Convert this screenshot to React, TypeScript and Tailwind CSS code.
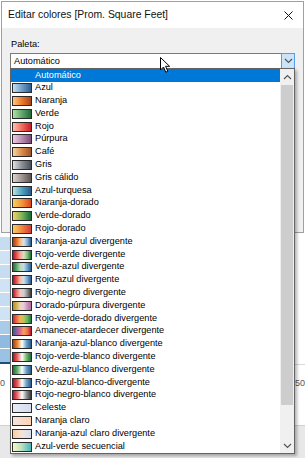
import React from 'react'

// Palette list shown in the open dropdown; swatch classes are written out in full
const palettes: { name: string; swatch: string }[] = [
  { name: 'Azul', swatch: 'bg-[linear-gradient(90deg,#c4dff2,#6f9fcb,#2c5d8e)]' },
  { name: 'Naranja', swatch: 'bg-[linear-gradient(90deg,#ffc685,#ec7a26,#a9451e)]' },
  { name: 'Verde', swatch: 'bg-[linear-gradient(90deg,#b3e0a6,#5fa66b,#24693d)]' },
  { name: 'Rojo', swatch: 'bg-[linear-gradient(90deg,#ffbeb2,#f26b5b,#c41e2e)]' },
  { name: 'Púrpura', swatch: 'bg-[linear-gradient(90deg,#eec9e5,#b98db2,#7c4d79)]' },
  { name: 'Café', swatch: 'bg-[linear-gradient(90deg,#f6d3a0,#d98a4a,#9f5228)]' },
  { name: 'Gris', swatch: 'bg-[linear-gradient(90deg,#e0e0e0,#8a8f96,#4a5058)]' },
  { name: 'Gris cálido', swatch: 'bg-[linear-gradient(90deg,#dcd4d0,#9e9390,#5e5452)]' },
  { name: 'Azul-turquesa', swatch: 'bg-[linear-gradient(90deg,#bce4d8,#4da3c4,#2c5985)]' },
  { name: 'Naranja-dorado', swatch: 'bg-[linear-gradient(90deg,#f4d166,#f4953a,#d8461b)]' },
  { name: 'Verde-dorado', swatch: 'bg-[linear-gradient(90deg,#f4d166,#7fb35a,#146c36)]' },
  { name: 'Rojo-dorado', swatch: 'bg-[linear-gradient(90deg,#f4d166,#f2843d,#d43d35)]' },
  { name: 'Naranja-azul divergente', swatch: 'bg-[linear-gradient(90deg,#9e3d22,#e56d26,#f6b97a,#dfe4ea,#7fb0d6,#2b5c8a)]' },
  { name: 'Rojo-verde divergente', swatch: 'bg-[linear-gradient(90deg,#a3123a,#e8524c,#f7a58f,#d8e0cc,#80c071,#24693d)]' },
  { name: 'Verde-azul divergente', swatch: 'bg-[linear-gradient(90deg,#24693d,#5aa867,#b4dcb3,#c6dbe9,#6ba3cf,#2b5c8a)]' },
  { name: 'Rojo-azul divergente', swatch: 'bg-[linear-gradient(90deg,#a90c38,#e5574c,#fbbca6,#cfdfef,#74a7d1,#2e5a87)]' },
  { name: 'Rojo-negro divergente', swatch: 'bg-[linear-gradient(90deg,#ae123a,#ea6f68,#f2c5bc,#cfcfcf,#8c8c8c,#3c3c3c)]' },
  { name: 'Dorado-púrpura divergente', swatch: 'bg-[linear-gradient(90deg,#ad9024,#d0b35a,#ead9b9,#e9c9dd,#c994b8,#ac6f9a)]' },
  { name: 'Rojo-verde-dorado divergente', swatch: 'bg-[linear-gradient(90deg,#be2a3e,#ec6a45,#f2b353,#b9c45e,#6ab35f,#22763f)]' },
  { name: 'Amanecer-atardecer divergente', swatch: 'bg-[linear-gradient(90deg,#33608c,#8a5fa0,#e0678b,#f7a35b,#ee7445,#b81840)]' },
  { name: 'Naranja-azul-blanco divergente', swatch: 'bg-[linear-gradient(90deg,#9e3d22,#f08a2c,#ffffff,#6aa1c7,#2b5c8a)]' },
  { name: 'Rojo-verde-blanco divergente', swatch: 'bg-[linear-gradient(90deg,#a3123a,#ec6a5a,#ffffff,#76b96a,#24693d)]' },
  { name: 'Verde-azul-blanco divergente', swatch: 'bg-[linear-gradient(90deg,#24693d,#67b26f,#ffffff,#6aa1c7,#2b5c8a)]' },
  { name: 'Rojo-azul-blanco-divergente', swatch: 'bg-[linear-gradient(90deg,#a90c38,#e8604f,#ffffff,#6fa2cb,#2e5a87)]' },
  { name: 'Rojo-negro-blanco divergente', swatch: 'bg-[linear-gradient(90deg,#ae123a,#ec6f6a,#ffffff,#8f8f8f,#3a3a3a)]' },
  { name: 'Celeste', swatch: 'bg-[linear-gradient(90deg,#e6ebf5,#d4dcee)]' },
  { name: 'Naranja claro', swatch: 'bg-[linear-gradient(90deg,#f4e4dc,#fcd2b5)]' },
  { name: 'Naranja-azul claro divergente', swatch: 'bg-[linear-gradient(90deg,#ffc99a,#f3e6dc,#d6deef)]' },
  { name: 'Azul-verde secuencial', swatch: 'bg-[linear-gradient(90deg,#fdf6c5,#b5e0c0,#4ab3b9)]' },
]

// shades of the bar chart peeking out behind the dialog
const bars = ['bg-[#c6dcf0]', 'bg-[#cfe3f4]', 'bg-[#c6dcf0]', 'bg-[#cfe3f4]', 'bg-[#c6dcf0]', 'bg-[#cfe3f4]', 'bg-[#a9cbe8]', 'bg-[#8fbbe2]', 'bg-[#9ac2e5]']

const Chevron = ({ up }: { up?: boolean }) => (
  <svg width="9" height="6" viewBox="0 0 9 6" className="block">
    <path d={up ? 'M1 5 L4.5 1.5 L8 5' : 'M1 1 L4.5 4.5 L8 1'} fill="none" stroke="#555" strokeWidth="1.2" />
  </svg>
)

export default function App() {
  return (
    <div className="relative w-[305px] h-[458px] overflow-hidden bg-white text-black font-['Liberation_Sans',Arial,sans-serif]">
      {/* Dialog */}
      <div className="ml-px mt-px w-[303px] h-[232px] border border-[#a0a0a0] bg-[#f0f0f0] flex flex-col">
        <div className="h-[26px] bg-white flex items-center justify-between pl-[6px] pr-[10px]">
          <span className="text-[10.4px] text-[#111]">Editar colores [Prom. Square Feet]</span>
          <svg width="9" height="9" viewBox="0 0 9 9" className="block">
            <path d="M0.5 0.5 L8.5 8.5 M8.5 0.5 L0.5 8.5" stroke="#111" strokeWidth="1" />
          </svg>
        </div>
        <div className="px-[8px] pt-[10px]">
          <div className="pl-px text-[9.2px] leading-[12px]">Paleta:</div>
          <div className="mt-[3px] h-[16px] border border-[#7a7a7a] bg-white flex items-center">
            <span className="flex-1 pl-[3px] text-[9.2px] leading-[12px]">Automático</span>
            <div className="-my-px -mr-px h-[16px] w-[14px] border border-[#569de5] bg-[#cce4f7] flex items-center justify-center">
              <Chevron />
            </div>
          </div>
        </div>
      </div>

      {/* Worksheet behind the dialog */}
      <div className="h-[192px] flex justify-between">
        <div className="w-[10px] pt-[4px] flex flex-col">
          <div className="flex flex-col gap-px">
            {bars.map((b, i) => (
              <div key={i} className={`h-[13px] ${b}`} />
            ))}
          </div>
          <div className="h-[2px] bg-[#1e4f7a]" />
          <div className="mt-[13px] text-[9px] leading-[12px] text-[#555]">0</div>
        </div>
        <div className="w-[11px] pl-px pt-[131px] flex flex-col">
          <div className="h-px bg-[#d9d9d9]" />
          <div className="mt-[12px] text-[9px] leading-[12px] text-[#555]">50</div>
        </div>
      </div>
      <div className="h-[33px] border-t border-[#d0d0d0] bg-[#e8e8e8]" />

      {/* Open dropdown list */}
      <div className="absolute left-[10px] top-[68px] w-[285px] h-[386px] border border-[#646464] bg-white shadow-[2px_2px_3px_rgba(0,0,0,0.3)] flex">
        <div className="flex-1 flex flex-col text-[9.2px]">
          <div className="h-[12.8px] bg-[#0078d7] text-white pl-[24px] flex items-center">Automático</div>
          {palettes.map((p) => (
            <div key={p.name} className="h-[12.8px] pl-px flex items-center gap-[3px] whitespace-nowrap">
              <div className={`w-[20px] h-[10px] shrink-0 border border-[#2a2a2a] ${p.swatch}`} />
              <span>{p.name}</span>
            </div>
          ))}
        </div>
        <div className="w-[14px] bg-[#f0f0f0] flex flex-col">
          <div className="h-[16px] flex items-center justify-center">
            <Chevron up />
          </div>
          <div className="h-[320px] mx-px bg-[#cdcdcd]" />
          <div className="flex-1" />
          <div className="h-[14px] flex items-center justify-center">
            <Chevron />
          </div>
        </div>
      </div>

      {/* Mouse pointer */}
      <svg width="11" height="17" viewBox="0 0 11 17" className="absolute left-[160px] top-[57px]">
        <path d="M0.5 0.5 L0.5 13 L3.5 10 L5.8 15.2 L7.8 14.3 L5.6 9.3 L9.6 9.3 Z" fill="#fff" stroke="#000" strokeWidth="1" strokeLinejoin="round" />
      </svg>
    </div>
  )
}
